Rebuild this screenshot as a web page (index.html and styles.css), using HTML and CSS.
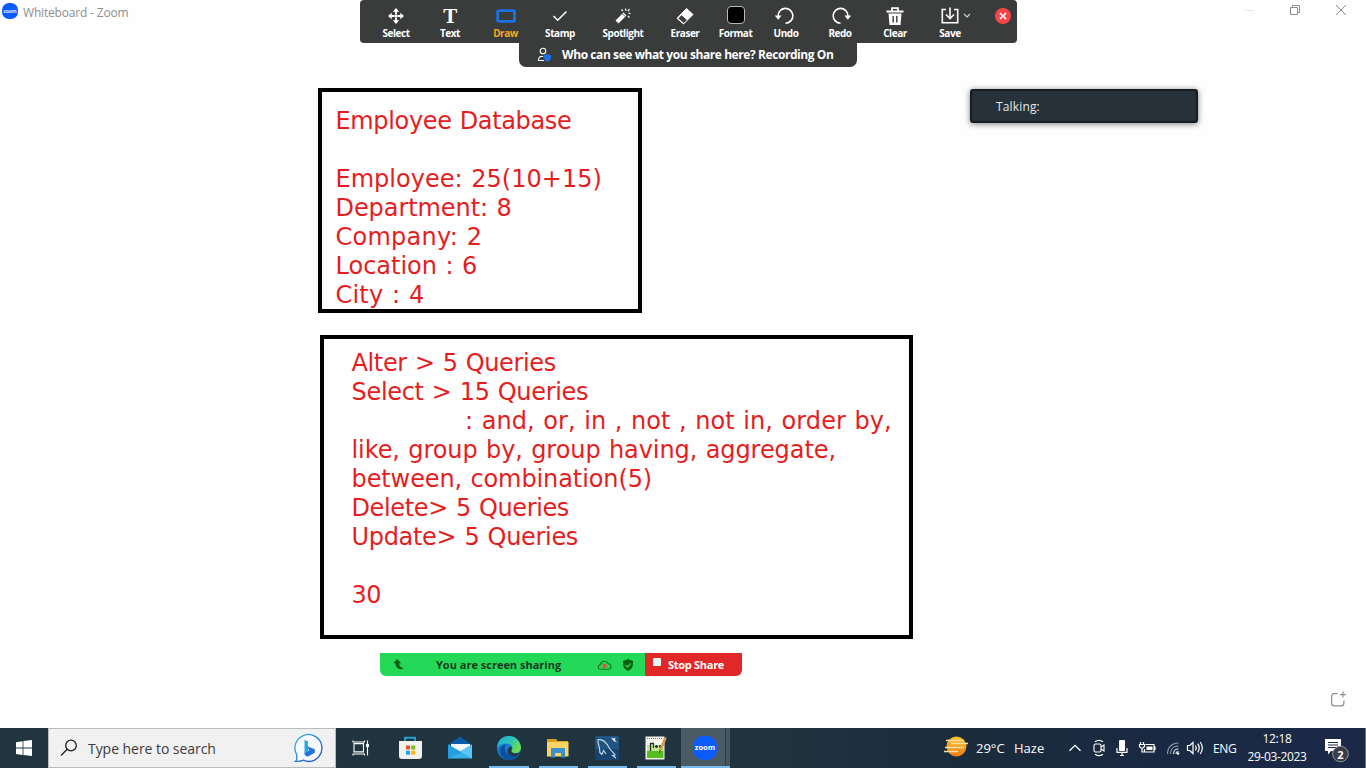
FILE: index.html
```html
<!DOCTYPE html>
<html lang="en">
<head>
<meta charset="utf-8">
<title>Whiteboard - Zoom</title>
<link rel="stylesheet" href="styles.css">
</head>
<body>
<div class="screen">
  <header class="titlebar">
    <span class="app-logo"><span>zoom</span></span>
    <span class="app-title">Whiteboard - Zoom</span>
    <div class="window-buttons">
      <svg width="12" height="20" viewBox="0 0 12 20"><path d="M1 10.500h10" stroke="#e9e9e9"/></svg>
      <svg width="12" height="20" viewBox="0 0 12 20" fill="none" stroke="#8c8c8c"><path d="M1.500 7.500h7v7h-7zM3.500 7.500v-2h7v7h-2"/></svg>
      <svg width="12" height="20" viewBox="0 0 12 20" stroke="#8c8c8c"><path d="M1 5l10 10M11 5L1 15"/></svg>
    </div>
  </header>

  <nav class="toolbar">
    <div class="tool w54"><svg viewBox="0 0 24 24" fill="#fff"><circle cx="12" cy="12" r="1.800"/><path d="M12 4l3.200 3.700h-2.200V10h-2V7.700H8.800zM12 20l3.200-3.700h-2.200V14h-2v2.300H8.800zM4 12l3.700-3.200v2.200H10v2H7.700v2.200zM20 12l-3.700-3.200v2.200H14v2h2.300v2.200z"/></svg><span class="label">Select</span></div>
    <div class="tool w54"><span class="t-icon">T</span><span class="label">Text</span></div>
    <div class="tool w56 active"><svg viewBox="0 0 24 24"><rect x="3.700" y="6.600" width="16.800" height="10.800" rx="1" fill="none" stroke="#1b72e4" stroke-width="2.800"/></svg><span class="label">Draw</span></div>
    <div class="tool w54"><svg viewBox="0 0 24 24"><path d="M5.500 12l4.200 4.200L18.500 7.500" fill="none" stroke="#fff" stroke-width="1.500"/></svg><span class="label">Stamp</span></div>
    <div class="tool w72"><svg viewBox="0 0 24 24" stroke="#fff" fill="none"><path d="M6 18l8-8" stroke-width="4"/><path d="M11.300 9.700l2.800 2.800" stroke="#3a3b3b" stroke-width=".8"/><path d="M14.500 4.500l.5 2.500M18.500 5l-1.500 2.200M19.500 9.500l-2-.4M18.500 13.500l-1.600-1.500M10.500 5.500l1.300 1.500" stroke-width="1.200"/></svg><span class="label">Spotlight</span></div>
    <div class="tool w52"><svg viewBox="0 0 24 24"><path d="M4 14.300L13.500 4.500l6.500 6L10.500 20z" fill="#fff" stroke="#fff" stroke-linejoin="round"/><path d="M8.600 11.200l5.300 4.900-3.300 3L5.300 14.300z" fill="#3a3b3b"/></svg><span class="label">Eraser</span></div>
    <div class="tool w49"><span class="color-chip"></span><span class="label">Format</span></div>
    <div class="tool w52"><svg viewBox="0 0 24 24"><path d="M4.100 12.500A7.400 7.400 0 1 1 11.500 19.200" fill="none" stroke="#fff" stroke-width="1.600"/><path d="M.8 11.500h6.800l-3.400 4.200z" fill="#fff"/></svg><span class="label">Undo</span></div>
    <div class="tool w56"><svg viewBox="0 0 24 24"><path d="M19.900 12.500A7.400 7.400 0 1 0 12.500 19.200" fill="none" stroke="#fff" stroke-width="1.600"/><path d="M23.200 11.500h-6.800l3.400 4.200z" fill="#fff"/></svg><span class="label">Redo</span></div>
    <div class="tool w54"><svg viewBox="0 0 24 24" fill="none"><path d="M3.500 7.500h17M9 7V4.200h6V7" stroke="#fff" stroke-width="1.800"/><path d="M5.500 9.500h13l-1 11.500h-11z" fill="#fff"/><path d="M10.200 12v6.500M13.800 12v6.500" stroke="#3a3b3b" stroke-width="1.400"/></svg><span class="label">Clear</span></div>
    <div class="tool w56"><svg viewBox="0 0 24 24" fill="none" stroke="#fff" stroke-width="1.600"><path d="M8 5.500H4.300v13.300h15.400V5.500H16M12 3.500v11M8 10.500l4 4.200 4-4.200"/></svg><span class="label">Save</span>
      <svg class="save-caret" viewBox="0 0 8 6"><path d="M1 1l3 3 3-3" fill="none" stroke="#d5d5d5" stroke-width="1.100"/></svg></div>
    <svg class="close-tool" viewBox="0 0 16 16"><circle cx="8" cy="8" r="8" fill="#f9434a"/><path d="M5 5l6 6M11 5l-6 6" stroke="#fff" stroke-width="1.700"/></svg>
  </nav>
  <div class="notice">
    <svg width="16" height="16" viewBox="0 0 16 16"><circle cx="6" cy="4" r="2.800" fill="none" stroke="#fff" stroke-width="1.100"/><path d="M2.500 9.500h3.800M7 13.500H1.500c0-2.500 1-4 3-4" fill="none" stroke="#fff" stroke-width="1.100"/><path d="M10.500 7l3.500 1.300v2.500c0 2-1.500 3.200-3.500 4-2-.8-3.500-2-3.500-4V8.300z" fill="#1b72e4"/></svg>
    <span class="notice-text">Who can see what you share here? Recording On</span>
  </div>

  <div class="talking"><span>Talking:</span></div>

  <main class="canvas">
    <section class="board board-a">
      <p class="l1">Employee Database</p>
      <p>&nbsp;</p>
      <p class="l2">Employee: 25(10+15)</p>
      <p class="l3">Department: 8</p>
      <p class="l4">Company: 2</p>
      <p class="l5">Location : 6</p>
      <p class="l6">City : 4</p>
    </section>
    <section class="board board-b">
      <p class="m1">Alter &gt; 5 Queries</p>
      <p class="m2">Select &gt; 15 Queries</p>
      <p class="m3">: and, or, in , not , not in, order by,</p>
      <p class="m4">like, group by, group having, aggregate,</p>
      <p class="m5">between, combination(5)</p>
      <p class="m6">Delete&gt; 5 Queries</p>
      <p class="m7">Update&gt; 5 Queries</p>
      <p>&nbsp;</p>
      <p class="m8">30</p>
    </section>
  </main>

  <div class="share">
    <div class="share-status">
      <svg class="share-arrow" viewBox="0 0 12 12"><path d="M4.500 0L9 4.500H6.700C6.700 7 8 9 11 9.800v1.200C6 11.500 2.700 9.500 2.700 4.500H.2z" fill="#075f12"/></svg>
      <span class="share-text">You are screen sharing</span>
      <svg class="share-cloud" viewBox="0 0 18 12"><path d="M4 10.800C.5 10.800.5 6 4 5.800 4 1.500 11 .2 12.500 4.500c4 0 4.500 6.300.5 6.300z" fill="none" stroke="#15701f" stroke-width="1.200"/><circle cx="8.500" cy="7" r="2.500" fill="#df5435"/></svg>
      <svg class="share-shield" viewBox="0 0 12 12"><path d="M6 0l5 2v3c0 3.500-2 5.500-5 7-3-1.500-5-3.500-5-7V2z" fill="#075f12"/><path d="M3.500 6l2 2 3.200-3.700" fill="none" stroke="#25d958" stroke-width="1.200"/></svg>
    </div>
    <div class="share-stop"><i></i><span>Stop Share</span></div>
  </div>

  <svg class="new-page" viewBox="0 0 18 18" fill="none" stroke="#8d8d96" stroke-width="1.200"><path d="M8.500 3.600H5.500Q2.600 3.600 2.600 6.500v6.500q0 2.900 2.900 2.900H12q2.900 0 2.900-2.900v-2.500M11 4.600h6M14 1.600v6"/></svg>

  <footer class="taskbar">
    <div class="start"><svg width="16" height="16" viewBox="0 0 16 16" fill="#fff"><path d="M0 2.200L6.600 1.200V7.600H0zM7.400 1.100L16 0v7.600H7.400zM0 8.400h6.600v6.500L0 14zM7.400 8.400H16V16l-8.600-1.100z"/></svg></div>
    <div class="search">
      <svg width="18" height="18" viewBox="0 0 18 18" fill="none" stroke="#222" stroke-width="1.300"><circle cx="11" cy="6.500" r="5.300"/><path d="M7.200 10.300L1 16.500"/></svg>
      <span class="search-text">Type here to search</span>
      <svg class="bing" width="30" height="30" viewBox="0 0 30 30"><defs><linearGradient id="bg" x1="0" y1="0" x2="1" y2="1"><stop offset="0" stop-color="#35b5ee"/><stop offset="1" stop-color="#234bb8"/></linearGradient></defs><path d="M1.500 28.300c1.500-.8 1.700-3 1-7A13.500 13.500 0 1 1 15 28.500q-3-.1-5.500-1.300-3.500 1.500-8 1.100z" fill="#f7faff" stroke="url(#bg)" stroke-width="1.300"/><path d="M10.500 7l3.500 1.200v9.600l-3.500 4.200z" fill="#2aa8e9"/><path d="M10.500 20.500l4.500-3-1.700-4.200 7.500 3v3.500L14 23.500q-2.500.5-3.500-3z" fill="#2475df"/></svg>
    </div>
    <div class="apps">
      <div class="app"><svg width="18" height="18" viewBox="0 0 18 18" fill="none" stroke="#fff" stroke-width="1.100"><path d="M2 4.600h9.500v8.300H2zM1 1.500v1.500h11.500V1.500M1 16.500V15h11.500v1.500M15.500 1.500v15"/><path d="M14 5h3v3h-3z" fill="#fff" stroke="none"/></svg></div>
      <div class="app"><svg width="26" height="26" viewBox="0 0 26 26"><path d="M8 7V2.700h10V7" fill="none" stroke="#259fca" stroke-width="2"/><path d="M2 6h23v15q0 3-3 3H5q-3 0-3-3z" fill="#f1f1f1"/><path d="M9 10.500h4v4H9z" fill="#f05023"/><path d="M14.200 10.500h4v4h-4z" fill="#7eba17"/><path d="M9 15.700h4v4H9z" fill="#22a3ed"/><path d="M14.200 15.700h4v4h-4z" fill="#fdb90c"/></svg></div>
      <div class="app mail"><svg width="26" height="26" viewBox="0 0 26 26"><path d="M1 10L13 1.500 25 10v4H1z" fill="#0a5ba9"/><path d="M4 9h19v9H4z" fill="#f6f8fb"/><path d="M1 9.500l12 7 12-7V23.500H1z" fill="#35b1ea"/><path d="M1 9.500l14 8-14 6z" fill="#249ee1"/><path d="M25 9.500l-12 7 12 7z" fill="#5ac6f4"/></svg></div>
      <div class="app open"><svg width="26" height="26" viewBox="0 0 26 26"><defs><linearGradient id="e1" x1="0" y1="0" x2="1" y2=".5"><stop offset="0" stop-color="#24a9e1"/><stop offset=".6" stop-color="#2fc5b0"/><stop offset="1" stop-color="#70df4c"/></linearGradient></defs><circle cx="13" cy="13" r="12" fill="#127ed3"/><path d="M1.500 10C4-1 21-3 24.800 11c1 5-3 8-7 7.300-3-.6-3-1.800-2-3.300 2-4-2-7.200-6-6.500-3.500 0-7 1.500-8.800 4.500z" fill="url(#e1)"/><path d="M9.500 9C7 15 12 24 22 20c-5 7-14 6-17 0-3-5 0-9 4.500-11z" fill="#0d4f9f"/><path d="M14.500 11.500c1.800 1 1.600 3 .8 4.200 0 2.300 5 3.800 9 1.300-1 2-2 3-3 3.500-4 1.500-8 .5-9.500-2.500-1-2.500 0-5.500 2.700-6.500z" fill="#213944"/></svg></div>
      <div class="app open"><svg width="26" height="26" viewBox="0 0 26 26"><path d="M2 4h9l1.500 2H23v15H2z" fill="#dc9d1b"/><path d="M2 7h21.500v14.500H2z" fill="#fbd467"/><path d="M6 13h14v9.500h-4V18h-6v4.500H6z" fill="#3b91cb"/></svg></div>
      <div class="app open"><svg width="26" height="26" viewBox="0 0 26 26"><rect x="1" y="1" width="24" height="24" rx="2" fill="#205482"/><path d="M1 14h24v11H1z" fill="#174570"/><path d="M8 19.500L5.800 17.500C6.500 12 3 8 4 4.800c4-1 8 2 11 7.700 1.200 3 4.500 4.500 6 7.500l-2.500.5 3.500 2.500M8 19.500l1.500-4 2.500 3.500" fill="none" stroke="#c9dbe8" stroke-width="1.100"/><path d="M17 2.500l2.500 1 2-1-.5 2.500 2 2.500-3.500-1.500z" fill="#e5edf3"/></svg></div>
      <div class="app open"><svg width="26" height="26" viewBox="0 0 26 26"><path d="M2.500 1.500h19v23h-19z" fill="#f4f4ee"/><path d="M4 14h16.500v9H4z" fill="#55bd1e"/><path d="M4 10h16.500v6H4z" fill="#c0e893"/><path d="M4 3.500h15" stroke="#777" stroke-dasharray="1 1"/><path d="M7.500 16V8.500h3V13M12 11.500h3M16 11.500h2.500M13.500 10v3M17.200 10v3" stroke="#27332a" stroke-width="1.300" fill="none"/><path d="M22.500 2.500L17 16" stroke="#d89b45" stroke-width="2.600"/><path d="M17.500 15l-1.400 3" stroke="#614126"/></svg></div>
      <div class="app open current"><span class="zoom-icon">zoom</span></div>
    </div>
    <div class="weather">
      <svg width="26" height="24" viewBox="0 0 26 24"><defs><linearGradient id="sun" x1="0" y1="0" x2="0" y2="1"><stop offset="0" stop-color="#fbc32d"/><stop offset="1" stop-color="#ef7b16"/></linearGradient></defs><circle cx="13.500" cy="10.500" r="10" fill="url(#sun)"/><path d="M3 4.500h18M8 7.500h17M2 11.500h19M1 15.500h14" stroke="#f9dda1" stroke-width="1.400"/></svg>
      <span class="temp">29°C</span><span class="haze">Haze</span>
    </div>
    <div class="tray">
      <svg width="14" height="18" viewBox="0 0 14 18"><path d="M1.500 11.800L7 6.300l5.500 5.500" fill="none" stroke="#fff" stroke-width="1.300"/></svg>
      <svg width="14" height="18" viewBox="0 0 14 18" fill="none" stroke="#fff" stroke-width="1.100"><rect x="2" y="5" width="7" height="8" rx="1.500"/><path d="M9 8l3-2v6l-3-2M3 2.800Q7 0 11 2.800M3 15.200q4 2.800 8 0"/></svg>
      <svg width="12" height="18" viewBox="0 0 12 18"><rect x="3" y="1" width="6" height="11" rx="1" fill="#fff"/><path d="M1 9v4.300h10V9M6 13v4M4 16.500h4" fill="none" stroke="#fff" stroke-width="1.200"/></svg>
      <svg width="18" height="18" viewBox="0 0 18 18" fill="none" stroke="#fff" stroke-width="1.200"><path d="M7.500 5.500H16v7.500H6.500v-3M17 7.500v3.500M2.500 3v3M5.500 3v3M1.500 5.500h5v2l-1.500 1.500H3L1.500 7.500zM4 9v4h2"/><path d="M8.500 7.500h6v3.500h-6z" fill="#fff" stroke="none"/></svg>
      <svg width="14" height="18" viewBox="0 0 14 18" fill="none" stroke="#8e9bae" stroke-width="1.200"><path d="M1.500 15C1.500 8 6 4 12.500 4M4.500 15c0-5 3-8 8-8"/><path d="M7.500 15c0-3 2-5 5-5M10 15c0-1.500 1-2.500 2.500-2.500" stroke="#d5dbe2"/><circle cx="12" cy="14.500" r="1.300" fill="#fff" stroke="none"/></svg>
      <svg class="speaker" width="18" height="18" viewBox="0 0 18 18" fill="none" stroke="#fff" stroke-width="1.200"><path d="M1.500 6.500h2.300L7 3.500v11l-3.200-3H1.500zM9.300 6.500q1.800 2.500 0 5M11.700 4.700q3 4.300 0 8.600M14.200 3q4.300 6 0 12"/></svg>
      <span class="lang">ENG</span>
    </div>
    <div class="clock"><span class="time">12:18</span><span class="date">29-03-2023</span></div>
    <div class="notifications"><svg width="26" height="26" viewBox="0 0 26 26"><path d="M1 2h16v12H7l-3 3.500V14H1z" fill="#fff"/><path d="M4 5.500h10M4 8h10M4 10.500h8" stroke="#1a2842" stroke-width="1.100"/><circle cx="16.500" cy="17" r="7.800" fill="#393d43" stroke="#8f949c"/></svg><span>2</span></div>
  </footer>
</div>
</body>
</html>
```
FILE: styles.css
```css
* { box-sizing: border-box; }
body { margin: 0; background: #fefefe; font-family: "Open Sans", "Noto Sans", sans-serif; }
svg { display: block; flex: none; }
p { margin: 0; }
.screen { position: relative; width: 1366px; height: 768px; overflow: hidden; display: flex; flex-direction: column; background: #fefefe; white-space: nowrap; }

.titlebar { display: flex; align-items: center; height: 22px; padding: 0 19px 0 2px; }
.app-logo { width: 16px; height: 16px; border-radius: 7px; background: #0b5cff; color: #dfe9ff; font-size: 5px; font-weight: 700; display: flex; align-items: center; justify-content: center; overflow: hidden; }
.app-title { margin: 2px 0 0 5px; font-size: 12px; letter-spacing: -.18px; color: #8f8f8f; }
.window-buttons { display: flex; gap: 34px; margin-left: auto; margin-top: -2px; }

.toolbar { position: absolute; left: 360px; top: 0; width: 657px; height: 43px; padding-left: 9px; display: flex; background: #3a3b3b; border-radius: 4px; color: #fff; }
.tool { position: relative; display: flex; flex-direction: column; align-items: center; padding-top: 4px; font-size: 10px; line-height: 12px; font-weight: 700; letter-spacing: -.45px; }
.tool > svg { width: 24px; height: 24px; }
.label { margin-top: -1px; }
.active .label { color: #f6a821; }
.active { padding-left: 1px; }
.w49 { width: 49px; } .w52 { width: 52px; } .w54 { width: 54px; } .w56 { width: 56px; } .w72 { width: 72px; }
.t-icon { height: 24px; font: 700 21px/24px "Liberation Serif", serif; }
.color-chip { width: 18px; height: 18px; margin: 2px 0 4px; background: #000; border: 1px solid #bbb; border-radius: 4px; }
.tool > .save-caret { position: absolute; left: 41px; top: 13px; width: 8px; height: 6px; }
.close-tool { width: 16px; height: 16px; margin: 8px 0 0 17px; }

.notice { position: absolute; left: 519px; top: 43px; width: 338px; height: 24px; padding-left: 18px; display: flex; align-items: center; background: #3a3b3b; border-radius: 0 0 7px 7px; color: #fff; font-size: 12px; font-weight: 700; letter-spacing: -.42px; }
.notice-text { margin: -1px 0 0 9px; }

.talking { position: absolute; left: 970px; top: 89px; width: 228px; height: 34px; padding-left: 24px; display: flex; align-items: center; border: 2px solid #171d23; border-radius: 3px; background: #27313a; color: #e4e7ea; font-size: 12px; letter-spacing: .15px; box-shadow: 0 1px 6px rgba(0,0,0,.5); }

.canvas { font: 24px/29px "DejaVu Sans", sans-serif; color: #e41e1e; word-spacing: .8px; }
.board { position: absolute; border: 4px solid #000; }
.board-a { left: 318px; top: 88px; width: 324px; height: 225px; padding: 15px 0 0 13.500px; }
.board-b { left: 320px; top: 335px; width: 593px; height: 304px; padding: 10px 0 0 27.500px; }
.l1 { letter-spacing: -.35px; }
.l2 { letter-spacing: .03px; }
.l3 { letter-spacing: -.07px; }
.l4 { letter-spacing: .25px; }
.l6 { letter-spacing: .2px; }
.m1 { letter-spacing: -.36px; }
.m2 { letter-spacing: -.31px; }
.m3 { padding-left: 113.500px; letter-spacing: .08px; }
.m4 { letter-spacing: -.07px; }
.m5 { letter-spacing: -.1px; }
.m6 { letter-spacing: -.37px; }
.m7 { letter-spacing: -.31px; }
.m8 { letter-spacing: -.5px; }

.share { position: absolute; left: 380px; top: 653px; width: 362px; height: 23px; display: flex; border-radius: 0 0 6px 6px; overflow: hidden; font-size: 11px; font-weight: 700; }
.share-status { width: 265px; background: #25d958; color: #16391f; display: flex; align-items: center; padding-left: 13px; }
.share-arrow { width: 11px; height: 11px; }
.share-text { width: 126px; margin-left: 32px; }
.share-cloud { width: 16px; height: 12px; margin-left: 35px; }
.share-shield { width: 12px; height: 12px; margin-left: 9px; }
.share-stop { width: 97px; background: #e02828; color: #fff; display: flex; align-items: center; padding-left: 8px; letter-spacing: -.28px; }
.share-stop span { margin-top: -1px; }
.share-stop i { width: 8px; height: 8px; margin: -5px 7px 0 0; background: #e2f8f8; border-radius: 1px; }

.new-page { position: absolute; left: 1329px; top: 690px; width: 18px; height: 18px; }

.taskbar { display: flex; margin-top: auto; height: 40px; background: linear-gradient(90deg, #21353f 0%, #20343f 55%, #1b2c3c 70%, #1a2943 86%, #1b2947 100%); color: #fff; }
.start { width: 48px; display: flex; align-items: center; justify-content: center; }
.search { width: 288px; display: flex; align-items: center; padding-left: 11px; background: #f1f1f1; border: 1px solid #b9bcbd; color: #3c3c3c; font-size: 14px; letter-spacing: -.05px; }
.search-text { margin-left: 10px; }
.bing { margin-left: auto; margin-right: 11px; }
.apps { display: flex; width: 394px; }
.app { flex: 1; display: flex; align-items: center; justify-content: center; position: relative; }
.mail { padding-left: 1px; }
.open::after { content: ""; position: absolute; left: 5px; right: 5px; bottom: 0; height: 2px; background: #76b9ed; }
.current { background: linear-gradient(90deg, #4a5b64 0 44px, #2b3e48 44px 45px, #465660 45px); }
.current::after { left: 0; right: 0; }
.zoom-icon { width: 24px; height: 24px; margin-right: 1px; border-radius: 10px; background: #0b5cff; font-size: 7.500px; font-weight: 700; line-height: 22px; text-align: center; }
.weather { display: flex; align-items: center; margin-left: 213px; font-size: 13px; width: 120px; }
.temp { margin-left: 7px; width: 38px; }
.tray { display: flex; align-items: center; gap: 10px; margin-left: 5px; font-size: 12px; }
.speaker { margin-left: -4px; }
.lang { margin-left: -1px; letter-spacing: -.4px; }
.clock { display: flex; flex-direction: column; align-items: center; justify-content: center; width: 70px; margin-left: auto; font-size: 12px; line-height: 18px; letter-spacing: -.35px; }
.notifications { position: relative; display: flex; align-items: center; width: 42px; margin-left: 12px; border-right: 1px solid #68748a; margin-right: 0; }
.notifications svg { margin-top: 4px; }
.notifications span { position: absolute; left: 12.500px; top: 18px; width: 8px; font-size: 11px; line-height: 18px; font-weight: 700; text-align: center; }
```
